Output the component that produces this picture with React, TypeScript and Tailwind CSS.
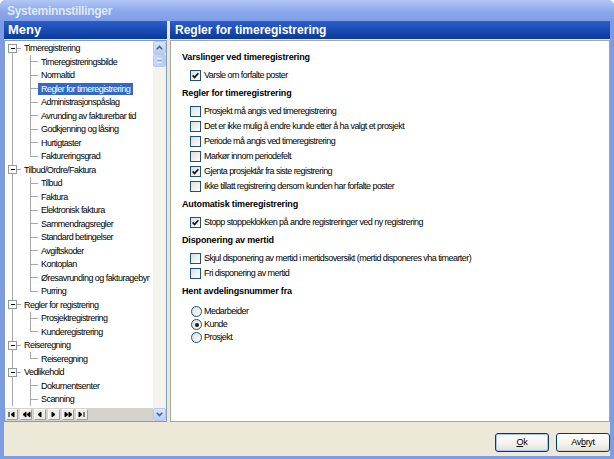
import React from "react"

type TreeNode = {
  label: string
  level: 0 | 1
  first?: boolean
  last?: boolean
  selected?: boolean
}

const nodes: TreeNode[] = [
  { label: "Timeregistrering", level: 0, first: true },
  { label: "Timeregistreringsbilde", level: 1 },
  { label: "Normaltid", level: 1 },
  { label: "Regler for timeregistrering", level: 1, selected: true },
  { label: "Administrasjonspåslag", level: 1 },
  { label: "Avrunding av fakturerbar tid", level: 1 },
  { label: "Godkjenning og låsing", level: 1 },
  { label: "Hurtigtaster", level: 1 },
  { label: "Faktureringsgrad", level: 1, last: true },
  { label: "Tilbud/Ordre/Faktura", level: 0 },
  { label: "Tilbud", level: 1 },
  { label: "Faktura", level: 1 },
  { label: "Elektronisk faktura", level: 1 },
  { label: "Sammendragsregler", level: 1 },
  { label: "Standard betingelser", level: 1 },
  { label: "Avgiftskoder", level: 1 },
  { label: "Kontoplan", level: 1 },
  { label: "Øresavrunding og fakturagebyr", level: 1 },
  { label: "Purring", level: 1, last: true },
  { label: "Regler for registrering", level: 0 },
  { label: "Prosjektregistrering", level: 1 },
  { label: "Kunderegistrering", level: 1, last: true },
  { label: "Reiseregning", level: 0 },
  { label: "Reiseregning", level: 1, last: true },
  { label: "Vedlikehold", level: 0 },
  { label: "Dokumentsenter", level: 1 },
  { label: "Scanning", level: 1 },
]

const LINE = "#a7a6aa"

function Guides({ node }: { node: TreeNode }) {
  if (node.level === 0) {
    return (
      <svg width="16" height="13.5" className="shrink-0" shapeRendering="crispEdges">
        <line x1="7.5" y1={node.first ? 6.5 : 0} x2="7.5" y2="13.5" stroke={LINE} />
        <line x1="11.5" y1="6.5" x2="16" y2="6.5" stroke={LINE} />
        <rect x="3.5" y="2.5" width="8" height="8" fill="#fff" stroke="#919b9c" />
        <line x1="5.5" y1="6.5" x2="10" y2="6.5" stroke="#000" />
      </svg>
    )
  }
  return (
    <svg width="33" height="13.5" className="shrink-0" shapeRendering="crispEdges">
      <line x1="7.5" y1="0" x2="7.5" y2="13.5" stroke={LINE} />
      <line x1="25.5" y1="0" x2="25.5" y2={node.last ? 6.5 : 13.5} stroke={LINE} />
      <line x1="25.5" y1="6.5" x2="33" y2="6.5" stroke={LINE} />
    </svg>
  )
}

function TreeRow({ node }: { node: TreeNode }) {
  return (
    <div className="flex h-[13.5px] shrink-0 items-center whitespace-nowrap">
      <Guides node={node} />
      <span
        className={`px-[3px] leading-[12px] ${node.selected ? "bg-[#316ac5] text-white" : "text-black"}`}
      >
        {node.label}
      </span>
    </div>
  )
}

function Arrow({ up }: { up?: boolean }) {
  return (
    <svg width="7" height="5" viewBox="0 0 7 5">
      <path
        d={up ? "M0.8 4.2 L3.5 1.5 L6.2 4.2" : "M0.8 0.8 L3.5 3.5 L6.2 0.8"}
        stroke="#4d6185"
        strokeWidth="1.6"
        fill="none"
      />
    </svg>
  )
}

function ScrollBar() {
  return (
    <div className="flex w-[13px] shrink-0 flex-col bg-[#f4f3ee]">
      <div className="flex h-[13px] items-center justify-center rounded-[2px] border border-[#b8c9ef] bg-gradient-to-b from-[#d9e4fd] to-[#b9cdf7]">
        <Arrow up />
      </div>
      <div className="flex h-[13px] flex-col items-center justify-center gap-[1px] rounded-[2px] border border-[#b8c9ef] bg-gradient-to-r from-[#c9d8fc] to-[#b6caf5]">
        <span className="h-px w-[5px] bg-[#eef4fe]" />
        <span className="h-px w-[5px] bg-[#8caaea]" />
        <span className="h-px w-[5px] bg-[#eef4fe]" />
      </div>
      <div className="flex-1" />
      <div className="flex h-[13px] items-center justify-center rounded-[2px] border border-[#b8c9ef] bg-gradient-to-b from-[#d9e4fd] to-[#b9cdf7]">
        <Arrow />
      </div>
    </div>
  )
}

function NavIcon({ kind }: { kind: number }) {
  const paths = [
    "M1 1 V6 M6 1 L3 3.5 L6 6 Z",
    "M4 1 L1 3.5 L4 6 Z M8 1 L5 3.5 L8 6 Z",
    "M5 1 L2 3.5 L5 6 Z",
    "M2 1 L5 3.5 L2 6 Z",
    "M1 1 L4 3.5 L1 6 Z M5 1 L8 3.5 L5 6 Z",
    "M1 1 L4 3.5 L1 6 Z M6 1 V6",
  ]
  return (
    <svg width="9" height="7" viewBox="0 0 9 7">
      <path d={paths[kind]} stroke="#000" strokeWidth="1" fill="#000" />
    </svg>
  )
}

function NavBar() {
  return (
    <div className="flex h-[13px] shrink-0 items-center gap-[2px] bg-[#d6d3cc] pl-[1px]">
      {[0, 1, 2, 3, 4, 5].map((k) => (
        <div
          key={k}
          className="flex h-[11px] w-[12px] items-center justify-center border border-b-[#a19f98] border-l-white border-r-[#a19f98] border-t-white bg-[#eeede8]"
        >
          <NavIcon kind={k} />
        </div>
      ))}
    </div>
  )
}

function CheckBox({ checked }: { checked?: boolean }) {
  return (
    <span className="flex h-[11px] w-[11px] shrink-0 items-center justify-center border border-[#1c5180] bg-gradient-to-br from-[#dcdcd7] to-white">
      {checked && (
        <svg width="7" height="7" viewBox="0 0 7 7">
          <path d="M0.6 3.4 L2.6 5.4 L6.4 1.2" stroke="#1a1a1a" strokeWidth="1.7" fill="none" />
        </svg>
      )}
    </span>
  )
}

function Radio({ checked }: { checked?: boolean }) {
  return (
    <span className="flex h-[11px] w-[11px] shrink-0 items-center justify-center rounded-full border border-[#1c5180] bg-gradient-to-br from-[#dcdcd7] to-white">
      {checked && <span className="h-[4px] w-[4px] rounded-full bg-[#1a1a1a]" />}
    </span>
  )
}

function Heading({ children }: { children: React.ReactNode }) {
  return (
    <div className="flex h-[14px] items-center text-[9px] font-bold tracking-[-0.15px] text-black">
      {children}
    </div>
  )
}

function CheckRow({ label, checked }: { label: string; checked?: boolean }) {
  return (
    <div className="flex h-[15px] items-center gap-[3px] pl-[8px] whitespace-nowrap">
      <CheckBox checked={checked} />
      <span className="tracking-[-0.55px]">{label}</span>
    </div>
  )
}

function RadioRow({ label, checked }: { label: string; checked?: boolean }) {
  return (
    <div className="flex h-[13px] items-center gap-[2px] pl-[9px] whitespace-nowrap">
      <Radio checked={checked} />
      <span className="tracking-[-0.55px]">{label}</span>
    </div>
  )
}

function XpButton({ children, primary }: { children: React.ReactNode; primary?: boolean }) {
  return (
    <button
      className={`flex h-[19px] w-[54px] items-center justify-center rounded-[3px] border border-[#003c74] bg-gradient-to-b from-white via-[#f5f4ef] to-[#e3e1d9] text-[9px] tracking-[-0.3px] text-black ${
        primary ? "shadow-[inset_0_0_0_1px_#a9c4f0]" : "shadow-[inset_0_-1px_0_#d6d0c5]"
      }`}
    >
      {children}
    </button>
  )
}

export default function App() {
  return (
    <div className="h-[459px] w-[614px] bg-white font-['Liberation_Sans',Arial,sans-serif] text-[9px]">
      <div className="flex h-full w-full flex-col overflow-hidden rounded-t-[6px] bg-[#7d9ce4]">
        {/* titlebar */}
        <div className="flex h-[21px] shrink-0 items-center bg-gradient-to-b from-[#b3c8f5] via-[#8eaaeb] to-[#7f9ee6] pl-[7px]">
          <span className="text-[12px] font-bold tracking-[-0.3px] text-[#dfe8fb]">
            Systeminnstillinger
          </span>
        </div>

        <div className="mx-[4px] flex flex-1 flex-col bg-[#ece9d8]">
          <div className="flex h-[401px] gap-[3px]">
            {/* venstre: meny */}
            <div className="flex w-[163px] shrink-0 flex-col gap-[1px]">
              <div className="flex h-[18px] shrink-0 items-center bg-gradient-to-b from-[#2c5fcc] to-[#0a399c] pl-[4px] text-[13px] font-bold text-white">
                Meny
              </div>
              <div className="flex min-h-0 flex-1 border border-[#7f9db9] bg-white">
                <div className="flex min-w-0 flex-1 flex-col">
                  <div className="flex min-h-0 flex-1 flex-col overflow-hidden pt-[0.5px] tracking-[-0.55px]">
                    {nodes.map((n, i) => (
                      <TreeRow key={i} node={n} />
                    ))}
                  </div>
                  <NavBar />
                </div>
                <ScrollBar />
              </div>
            </div>

            {/* høyre: innhold */}
            <div className="flex min-w-0 flex-1 flex-col gap-[1px]">
              <div className="flex h-[18px] shrink-0 items-center bg-gradient-to-b from-[#2c5fcc] to-[#0a399c] pl-[5px] text-[12px] font-bold text-white">
                Regler for timeregistrering
              </div>
              <div className="flex min-h-0 flex-1 flex-col border border-[#aca899] bg-white pl-[11px] pt-[10px] text-black">
                <Heading>Varslinger ved timeregistrering</Heading>
                <div className="mt-[3px]">
                  <CheckRow label="Varsle om forfalte poster" checked />
                </div>

                <div className="mt-[4px]">
                  <Heading>Regler for timeregistrering</Heading>
                </div>
                <div className="mt-[3px]">
                  <CheckRow label="Prosjekt må angis ved timeregistrering" />
                  <CheckRow label="Det er ikke mulig å endre kunde etter å ha valgt et prosjekt" />
                  <CheckRow label="Periode må angis ved timeregistrering" />
                  <CheckRow label="Markør innom periodefelt" />
                  <CheckRow label="Gjenta prosjektår fra siste registrering" checked />
                  <CheckRow label="Ikke tillatt registrering dersom kunden har forfalte poster" />
                </div>

                <div className="mt-[4px]">
                  <Heading>Automatisk timeregistrering</Heading>
                </div>
                <div className="mt-[3px]">
                  <CheckRow label="Stopp stoppeklokken på andre registreringer ved ny registrering" checked />
                </div>

                <div className="mt-[4px]">
                  <Heading>Disponering av mertid</Heading>
                </div>
                <div className="mt-[3px]">
                  <CheckRow label="Skjul disponering av mertid i mertidsoversikt (mertid disponeres vha timearter)" />
                  <CheckRow label="Fri disponering av mertid" />
                </div>

                <div className="mt-[4px]">
                  <Heading>Hent avdelingsnummer fra</Heading>
                </div>
                <div className="mt-[6px]">
                  <RadioRow label="Medarbeider" />
                  <RadioRow label="Kunde" checked />
                  <RadioRow label="Prosjekt" />
                </div>
              </div>
            </div>
          </div>

          {/* knapper */}
          <div className="flex flex-1 items-start justify-end gap-[7px] pt-[11px]">
            <XpButton primary>
              <span className="underline">O</span>k
            </XpButton>
            <XpButton>
              Av<span className="underline">b</span>ryt
            </XpButton>
          </div>
        </div>
        <div className="h-[3px] shrink-0" />
      </div>
    </div>
  )
}
